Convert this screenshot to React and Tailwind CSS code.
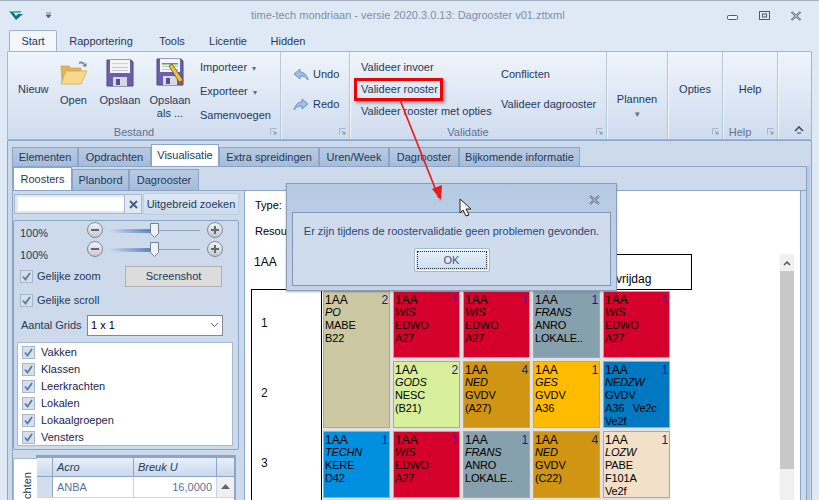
import React from "react";

function Floppy({ pencil }) {
  return (
    <svg width="28" height="28" viewBox="0 0 28 28">
      <path d="M1 1h24l2 2v24H1z" fill="#6a61ad" stroke="#4a4488" strokeWidth="1" />
      <rect x="4" y="1" width="20" height="13" fill="#f4f4f4" />
      {pencil ? <rect x="6" y="5" width="16" height="1.5" fill="#3cb44a" /> : <rect x="6" y="4" width="16" height="1" fill="#cfcfe0" />}
      <rect x="6" y="8" width="16" height="1" fill="#c4c4d4" />
      <rect x="6" y="11" width="16" height="1" fill="#c4c4d4" />
      <rect x="7" y="18" width="14" height="9" fill="#d8d8e4" />
      <rect x="10" y="20" width="4" height="6" fill="#56508f" />
      {pencil ? (
        <g>
          <path d="M13 8l3-2 11 16-1 3-3-1z" fill="#f0c040" stroke="#5a4a20" strokeWidth="0.8" />
          <path d="M23 24l3-2 1 4z" fill="#d04040" />
        </g>
      ) : null}
    </svg>
  );
}

function Folder() {
  return (
    <svg width="28" height="28" viewBox="0 0 28 28">
      <path d="M19 3c3-1 5 0 6 2l2-1-1 4-4-1 2-1c-1-1-3-2-5-1z" fill="#7d8796" />
      <path d="M1 7h8l2 2h10v3H5L2 24z" fill="#e2b35a" stroke="#c49a4a" strokeWidth="0.6" />
      <path d="M6 12h21l-6 13H1z" fill="#f8d98c" stroke="#d5a850" strokeWidth="0.8" />
    </svg>
  );
}

function ArrowIcon({ flip, color1, color2 }) {
  return (
    <svg width="16" height="12" viewBox="0 0 16 12" className={flip ? "-scale-x-100" : ""}>
      <path d="M1 5L7 0v3c4 0 7 3 8 8-2-3-4-4-8-4v3z" fill={color1} stroke={color2} strokeWidth="0.8" />
    </svg>
  );
}

function Launcher() {
  return (
    <svg width="7" height="7" viewBox="0 0 7 7" className="absolute right-[3px] bottom-[4px]">
      <path d="M0.5 6.5v-6h6" fill="none" stroke="#a9b4c4" />
      <path d="M3 3l3 3M6 3.5V6H3.5" fill="none" stroke="#8494a8" />
    </svg>
  );
}

function Group({ w, label, children, launcher = true }) {
  return (
    <div className={`relative shrink-0 border-r border-[#b4c5dc] shadow-[1px_0_0_#f3f7fc] ${w}`}>
      {children}
      <div className="absolute bottom-[0] left-0 right-0 text-center leading-[14px] pr-[20px] text-[#5b7296]">{label}</div>
      {launcher ? <Launcher /> : null}
    </div>
  );
}

function Tab({ label, w, active, sub }) {
  const h = active ? (sub ? "h-[23px]" : "h-[22px]") : sub ? "h-[21px]" : "h-[19px]";
  return (
    <div
      className={`${w} ${h} flex items-center justify-center border border-b-0 border-[#8aa5c8] text-[#1e395b] ${
        active ? "bg-white" : "bg-gradient-to-b from-[#b8cbe3] to-[#a6bcd9]"
      }`}
    >
      {label}
    </div>
  );
}

function Check() {
  return (
    <span className="w-[13px] h-[13px] shrink-0 border border-[#a5b8d2] bg-[#d9dfe8] flex items-center justify-center">
      <svg width="9" height="9" viewBox="0 0 9 9">
        <path d="M1 4.5L3.5 7.5L8 1" fill="none" stroke="#5b7ba8" strokeWidth="1.8" />
      </svg>
    </span>
  );
}

function RoundBtn({ plus }) {
  return (
    <span className="w-[16px] h-[16px] rounded-full border border-[#7f8a98] bg-gradient-to-b from-[#f4f4f4] to-[#c4c8ce] flex items-center justify-center relative shrink-0">
      <span className="w-[8px] h-[2px] bg-[#5f6874]" />
      {plus ? <span className="absolute w-[2px] h-[8px] bg-[#5f6874]" /> : null}
    </span>
  );
}

function Slider() {
  return (
    <div className="flex items-center w-[136px] justify-between">
      <RoundBtn />
      <div className="relative w-[90px] h-[1px] bg-[#8ea3bd]">
        <div className="absolute left-0 top-[-1px] w-[44px] h-[4px] bg-gradient-to-r from-[#cfdcec] to-[#3a6cb0] opacity-80" />
        <svg width="9" height="15" viewBox="0 0 9 15" className="absolute left-[40px] top-[-7px]">
          <path d="M.5.5h8v10l-4 4-4-4z" fill="#eef1f5" stroke="#76818f" />
        </svg>
      </div>
      <RoundBtn plus />
    </div>
  );
}

function Cell({ c, n, lines, bg, cls = "" }) {
  return (
    <div className={`relative border border-[#93c83e] pl-[1px] pt-[2px] text-[11px] leading-[13px] tracking-[-0.15px] text-black overflow-hidden ${bg} ${cls}`}>
      <span className="absolute right-[1px] top-[2px] text-[12px] text-[#17179a]">{n}</span>
      <div className="text-[12px] leading-[12px] tracking-normal">{c}</div>
      <div className="italic">{lines[0]}</div>
      {lines.slice(1).map((l) => (
        <div key={l} className="whitespace-pre">{l}</div>
      ))}
    </div>
  );
}

export default function App() {
  const red = "bg-[#d5002b]";
  const gray = "bg-[#87a0ae]";
  const gold = "bg-[#d09512]";
  return (
    <div className="relative w-[819px] h-[500px] overflow-hidden bg-[#dfe9f5] font-['Liberation_Sans',sans-serif] text-[11px] text-[#1e395b]">
      {/* title bar */}
      <div className="h-[30px] flex items-center relative px-[9px] border-t border-[#a3afbf]">
        <svg width="14" height="10" viewBox="0 0 14 10">
          <path d="M0 0l7 9 7-6H9L7 5 4 1z" fill="#16707a" />
          <path d="M3 0h10l-2 2H5z" fill="#3cc0b4" />
        </svg>
        <svg width="7" height="7" viewBox="0 0 7 7" className="ml-[22px]">
          <path d="M1 1h5M1 3h5L3.5 6z" fill="#4a5a70" stroke="#4a5a70" strokeWidth="0.7" />
        </svg>
        <div className="absolute left-[251px] top-[7px] text-[11px] leading-[15px] text-[#7d8fa8]">
          time-tech mondriaan - versie 2020.3.0.13: Dagrooster v01.zttxml
        </div>
        <div className="absolute right-[0] top-0 flex items-center h-full">
          <svg width="12" height="6" viewBox="0 0 12 6" className="mr-[20px] mt-[4px]">
            <rect x="0.5" y="0.5" width="10" height="4" rx="1" fill="#eef3f9" stroke="#4b5a6e" />
          </svg>
          <svg width="11" height="10" viewBox="0 0 11 10" className="mr-[20px]">
            <rect x="0.5" y="0.5" width="10" height="8" fill="none" stroke="#4b5a6e" />
            <rect x="3.5" y="3" width="4" height="3" fill="none" stroke="#4b5a6e" />
          </svg>
          <svg width="12" height="10" viewBox="0 0 12 10" className="mr-[17px]">
            <path d="M1.5 1l9 8M10.5 1l-9 8" stroke="#4b5a6e" strokeWidth="2" />
            <path d="M1.5 1l9 8M10.5 1l-9 8" stroke="#eef3f9" strokeWidth="0.7" />
          </svg>
        </div>
      </div>

      {/* ribbon tabs */}
      <div className="h-[21px] flex items-end pl-[9px]">
        <div className="w-[48px] h-[21px] bg-gradient-to-b from-[#f0f6fc] to-[#f4f8fd] border border-b-0 border-[#9db2cd] rounded-t-[2px] flex items-center justify-center">Start</div>
        <div className="w-[88px] text-center leading-[20px]">Rapportering</div>
        <div className="w-[54px] text-center leading-[20px]">Tools</div>
        <div className="w-[58px] text-center leading-[20px]">Licentie</div>
        <div className="w-[62px] text-center leading-[20px]">Hidden</div>
      </div>

      {/* ribbon */}
      <div className="mx-[7px] h-[89px] flex border border-[#a5b6cc] rounded-[1px] bg-gradient-to-b from-[#eef4fb] to-[#cfdcee]">
        <Group w="w-[273px]" label="Bestand">
          <div className="flex h-full">
            <div className="w-[46px] pl-[10px] pt-[30px] leading-[15px]">Nieuw</div>
            <div className="w-[39px] flex flex-col items-center pt-[7px]">
              <Folder />
              <div className="mt-[6px] leading-[15px]">Open</div>
            </div>
            <div className="w-[54px] flex flex-col items-center pt-[7px]">
              <Floppy />
              <div className="mt-[6px] leading-[15px]">Opslaan</div>
            </div>
            <div className="w-[46px] flex flex-col items-center pt-[6px] text-center">
              <Floppy pencil />
              <div className="mt-[8px] leading-[13px]">Opslaan<br />als ...</div>
            </div>
            <div className="pl-[7px] pt-[4px] leading-[22px] whitespace-nowrap">
              <div>Importeer <span className="text-[8px] pl-[2px] text-[#5f6f84]">▾</span></div>
              <div>Exporteer <span className="text-[8px] pl-[2px] text-[#5f6f84]">▾</span></div>
              <div>Samenvoegen</div>
            </div>
          </div>
        </Group>
        <Group w="w-[69px]" label="">
          <div className="pl-[12px] pt-[15px] flex flex-col gap-[15px] leading-[15px]">
            <div className="flex items-center gap-[4px]"><ArrowIcon color1="#9cc0e6" color2="#5f87b8" />Undo</div>
            <div className="flex items-center gap-[4px]"><ArrowIcon flip color1="#9cc0e6" color2="#5f87b8" />Redo</div>
          </div>
        </Group>
        <Group w="w-[257px]" label="Validatie">
          <div className="flex">
            <div className="pl-[11px] pt-[4px] leading-[22px] w-[151px] whitespace-nowrap">
              <div>Valideer invoer</div>
              <div>Valideer rooster</div>
              <div>Valideer rooster met opties</div>
            </div>
            <div className="pt-[15px] flex flex-col gap-[15px] leading-[15px] whitespace-nowrap">
              <div>Conflicten</div>
              <div>Valideer dagrooster</div>
            </div>
          </div>
        </Group>
        <Group w="w-[61px]" label="" launcher={false}>
          <div className="text-center pt-[40px] leading-[15px]">Plannen</div>
          <div className="text-center text-[9px] leading-[10px] pt-[2px] text-[#5f6f84]">▾</div>
        </Group>
        <Group w="w-[55px]" label="">
          <div className="text-center pt-[30px] leading-[15px]">Opties</div>
        </Group>
        <Group w="w-[55px]" label="Help">
          <div className="text-center pt-[30px] leading-[15px]">Help</div>
        </Group>
        <div className="flex-1 relative">
          <svg width="10" height="8" viewBox="0 0 10 8" className="absolute left-[16px] bottom-[5px]">
            <path d="M1 5l4-4 4 4" fill="none" stroke="#3c4a5c" strokeWidth="1.6" />
            <path d="M3 7h4" stroke="#3c4a5c" />
          </svg>
        </div>
      </div>

      {/* main area */}
      <div className="h-[360px] mx-[7px] border-l border-r border-t border-[#8aa5c8] bg-[#ccdaec] pl-[4px]">
        <div className="h-[25px] flex items-end">
          <Tab w="w-[66px]" label="Elementen" />
          <Tab w="w-[73px]" label="Opdrachten" />
          <Tab w="w-[68px]" label="Visualisatie" active />
          <Tab w="w-[100px]" label="Extra spreidingen" />
          <Tab w="w-[70px]" label="Uren/Week" />
          <Tab w="w-[70px]" label="Dagrooster" />
          <Tab w="w-[121px]" label="Bijkomende informatie" />
        </div>
        <div className="w-[795px] h-[334px] border-t border-l border-r border-[#8aa5c8] shadow-[3px_0_0_#b9c9de] bg-[#ccdaec]">
          <div className="h-[23px] flex items-end">
            <Tab sub w="w-[59px]" label="Roosters" active />
            <Tab sub w="w-[57px]" label="Planbord" />
            <Tab sub w="w-[70px]" label="Dagrooster" />
          </div>
          <div className="flex h-[310px] border-t border-[#8aa5c8]">
            {/* left panel */}
            <div className="w-[231px] shrink-0">
              <div className="flex items-center h-[22px] mt-[2px]">
                <div className="ml-[1px] w-[128px] h-[20px] border border-[#a5b8d2] bg-[#dfe8f3] flex items-center pl-[3px] pr-[17px] relative">
                  <div className="h-[14px] flex-1 bg-white" />
                  <span className="absolute right-[0] top-0 w-[17px] h-full border-l border-[#a5b8d2] flex items-center justify-center">
                    <svg width="9" height="9" viewBox="0 0 9 9"><path d="M1 1l7 7M8 1L1 8" stroke="#4c5e78" strokeWidth="2" /></svg>
                  </span>
                </div>
                <div className="ml-[1px] w-[96px] h-[22px] border border-[#bdcde2] rounded-[2px] bg-gradient-to-b from-[#dfe9f5] to-[#cddaec] flex items-center justify-center whitespace-nowrap">
                  Uitgebreid zoeken
                </div>
              </div>
              <div className="mt-[5px] w-[226px] h-[230px] border border-[#8aa5c8] rounded-[2px] pl-[6px]">
                <div className="flex h-[44px]">
                  <div className="w-[67px] leading-[22px] pt-[1px]">
                    <div>100%</div>
                    <div>100%</div>
                  </div>
                  <div className="pt-[1px] flex flex-col gap-[3px]">
                    <Slider />
                    <Slider />
                  </div>
                </div>
                <div className="flex items-center -mt-[1px] h-[24px]">
                  <Check />
                  <span className="pl-[4px] w-[92px]">Gelijke zoom</span>
                  <div className="w-[97px] h-[21px] border border-[#b0b0b0] bg-[#dcdcdc] flex items-center justify-center">Screenshot</div>
                </div>
                <div className="flex items-center h-[24px]">
                  <Check />
                  <span className="pl-[4px]">Gelijke scroll</span>
                </div>
                <div className="flex items-center mt-[2px] h-[22px] pl-[1px]">
                  <span className="w-[66px] whitespace-nowrap">Aantal Grids</span>
                  <div className="w-[136px] h-[21px] border border-[#7f8a98] bg-white flex items-center justify-between px-[3px] text-black">
                    <span>1 x 1</span>
                    <svg width="9" height="6" viewBox="0 0 9 6"><path d="M1 1l3.5 3.5L8 1" fill="none" stroke="#5a6676" /></svg>
                  </div>
                </div>
                <div className="mt-[6px] -ml-[3px] w-[216px] h-[104px] border border-[#a5b8d2] bg-white pl-[4px] pt-[1px]">
                  {["Vakken", "Klassen", "Leerkrachten", "Lokalen", "Lokaalgroepen", "Vensters"].map((t) => (
                    <div key={t} className="flex items-center h-[17px]">
                      <Check />
                      <span className="pl-[6px] text-[#1c1c50]">{t}</span>
                    </div>
                  ))}
                </div>
              </div>
              <div className="mt-[5px] flex h-[46px]">
                <div className="w-[24px] mt-[3px] bg-white border-t border-l border-[#a5b8d2] relative overflow-hidden">
                  <span className="absolute left-[6px] top-[13px] [writing-mode:vertical-rl] rotate-180 leading-[14px]">chten</span>
                </div>
                <div className="-ml-[1px] w-[200px] border-t-[3px] border-l border-r-[2px] border-[#8ea6c6] bg-white">
                  <div className="flex h-[19px] bg-gradient-to-b from-[#e8f0f9] to-[#c9d9ec] border-b border-[#8ea6c6] italic">
                    <div className="w-[16px] border-r border-[#8ea6c6]" />
                    <div className="w-[81px] border-r border-[#8ea6c6] pl-[4px] leading-[18px]">Acro</div>
                    <div className="w-[83px] border-r border-[#8ea6c6] pl-[4px] leading-[18px]">Breuk U</div>
                  </div>
                  <div className="flex h-[21px] text-[#5b7296] border-b border-[#c3d6ee]">
                    <div className="w-[16px] border-r border-[#8ea6c6] bg-[#d2deee]" />
                    <div className="w-[81px] border-r border-[#c3d6ee] pl-[4px] leading-[20px]">ANBA</div>
                    <div className="w-[83px] border-r border-[#c3d6ee] pr-[4px] text-right leading-[20px]">16,0000</div>
                    <div className="w-[17px] bg-[#f0f0f0] flex justify-center pt-[7px]">
                      <svg width="9" height="5" viewBox="0 0 9 5"><path d="M0 5l4.5-5L9 5z" fill="#5a6676" /></svg>
                    </div>
                  </div>
                </div>
              </div>
            </div>

            {/* canvas */}
            <div className="w-[557px] shrink-0 bg-white border-l border-r border-[#8aa5c8] text-black pl-[6px]">
              <div className="pt-[7px] pl-[4px] leading-[15px]">Type:</div>
              <div className="pt-[11px] pl-[4px] leading-[15px]">Resources:</div>
              <div className="flex mt-[15px]">
                <div className="w-[441px] shrink-0">
                  <div className="flex h-[35px]">
                    <div className="w-[70px] pl-[3px] pt-[1px] text-[12px] leading-[15px]">1AA</div>
                    <div className="w-[371px] h-[36px] border border-black flex items-end pl-[294px] pb-[2px] text-[12px] leading-[15px]">vrijdag</div>
                  </div>
                  <div className="flex">
                    <div className="w-[71px] h-[212px] border-l border-t border-r border-black flex flex-col shrink-0 text-[#111] text-[12px]">
                      <div className="h-[70px] flex items-center pl-[9px] pb-[4px]">1</div>
                      <div className="h-[70px] flex items-center pl-[9px] pb-[4px]">2</div>
                      <div className="h-[70px] flex items-center pl-[9px] pb-[4px]">3</div>
                    </div>
                    <div className="ml-[1px] mt-[2px] h-[210px] grid grid-cols-[67px_67px_67px_67px_67px] grid-rows-[67px_67px_67px] gap-[3px] bg-[#e2e2e2]">
                      <Cell c="1AA" n="2" lines={["PO", "MABE", "B22"]} bg="bg-[#cbc8a2]" cls="row-span-2" />
                      <Cell c="1AA" n="1" lines={["WIS", "EDWO", "A27"]} bg={red} />
                      <Cell c="1AA" n="1" lines={["WIS", "EDWO", "A27"]} bg={red} />
                      <Cell c="1AA" n="1" lines={["FRANS", "ANRO", "LOKALE.."]} bg={gray} />
                      <Cell c="1AA" n="1" lines={["WIS", "EDWO", "A27"]} bg={red} />
                      <Cell c="1AA" n="2" lines={["GODS", "NESC", "(B21)"]} bg="bg-[#d7ef9b]" />
                      <Cell c="1AA" n="4" lines={["NED", "GVDV", "(A27)"]} bg={gold} />
                      <Cell c="1AA" n="1" lines={["GES", "GVDV", "A36"]} bg="bg-[#ffbb00]" />
                      <Cell c="1AA" n="1" lines={["NEDZW", "GVDV", "A36   Ve2c", "Ve2f"]} bg="bg-[#0078c2]" />
                      <Cell c="1AA" n="1" lines={["TECHN", "KERE", "D42"]} bg="bg-[#0090df]" />
                      <Cell c="1AA" n="1" lines={["WIS", "EDWO", "A27"]} bg={red} />
                      <Cell c="1AA" n="1" lines={["FRANS", "ANRO", "LOKALE.."]} bg={gray} />
                      <Cell c="1AA" n="4" lines={["NED", "GVDV", "(C22)"]} bg={gold} />
                      <Cell c="1AA" n="1" lines={["LOZW", "PABE", "F101A", "Ve2f"]} bg="bg-[#f3e0c8]" />
                    </div>
                  </div>
                </div>
                <div className="ml-[88px] w-[14px] h-[246px] bg-[#f0f0f0] flex flex-col items-center shrink-0">
                  <svg width="8" height="5" viewBox="0 0 8 5" className="mt-[7px]"><path d="M1 4l3-3 3 3" fill="none" stroke="#555" strokeWidth="1.5" /></svg>
                  <div className="mt-[5px] w-full h-[198px] bg-[#c8c8c8]" />
                </div>
              </div>
            </div>
          </div>
        </div>
      </div>

      {/* dialog */}
      <div className="absolute left-[286px] top-[183px] w-[331px] h-[108px] border border-[#8c9db4] bg-gradient-to-b from-[#b6cae3] to-[#c3d4ea] shadow-[0_1px_2px_rgba(60,80,110,0.4)]">
        <svg width="13" height="10" viewBox="0 0 13 10" className="absolute right-[15px] top-[11px]">
          <path d="M2 1l9 8M11 1l-9 8" stroke="#4b5a6e" strokeWidth="2.2" />
          <path d="M2 1l9 8M11 1l-9 8" stroke="#eef3f9" strokeWidth="0.8" />
        </svg>
        <div className="absolute left-[5px] top-[28px] w-[319px] h-[74px] border border-[#7f96b4] bg-[#cfdcee] text-center">
          <div className="pt-[11px] leading-[15px] text-[#2a4672] whitespace-nowrap">Er zijn tijdens de roostervalidatie geen problemen gevonden.</div>
          <div className="mx-auto mt-[10px] w-[74px] h-[22px] rounded-[2px] border border-white shadow-[0_0_0_1px_#a5b6cc] bg-gradient-to-b from-[#e8f0f9] to-[#cfdff0] flex items-center justify-center p-[1px]">
            <div className="w-full h-full border border-dotted border-[#1a2a40] flex items-center justify-center text-[#44587a]">OK</div>
          </div>
        </div>
      </div>

      {/* annotation */}
      <div className="absolute left-[354px] top-[78px] w-[89px] h-[23px] border-[3px] border-[#f00000] shadow-[2px_2px_3px_rgba(60,60,60,0.5)]" />
      <svg width="60" height="110" viewBox="0 0 60 110" className="absolute left-[395px] top-[98px]">
        <path d="M6 3L45 103" stroke="#9aa6b6" strokeWidth="1.6" opacity="0.5" />
        <path d="M5 2L44 100" stroke="#f01818" strokeWidth="1.6" />
        <path d="M46 102L37 91L47 87z" fill="#f01818" />
      </svg>
      {/* cursor */}
      <svg width="14" height="20" viewBox="0 0 14 20" className="absolute left-[459px] top-[198px]">
        <path d="M1 1v14l3-3 3 6 3-1-3-6h5z" fill="#fff" stroke="#222" strokeWidth="1" />
      </svg>
    </div>
  );
}
